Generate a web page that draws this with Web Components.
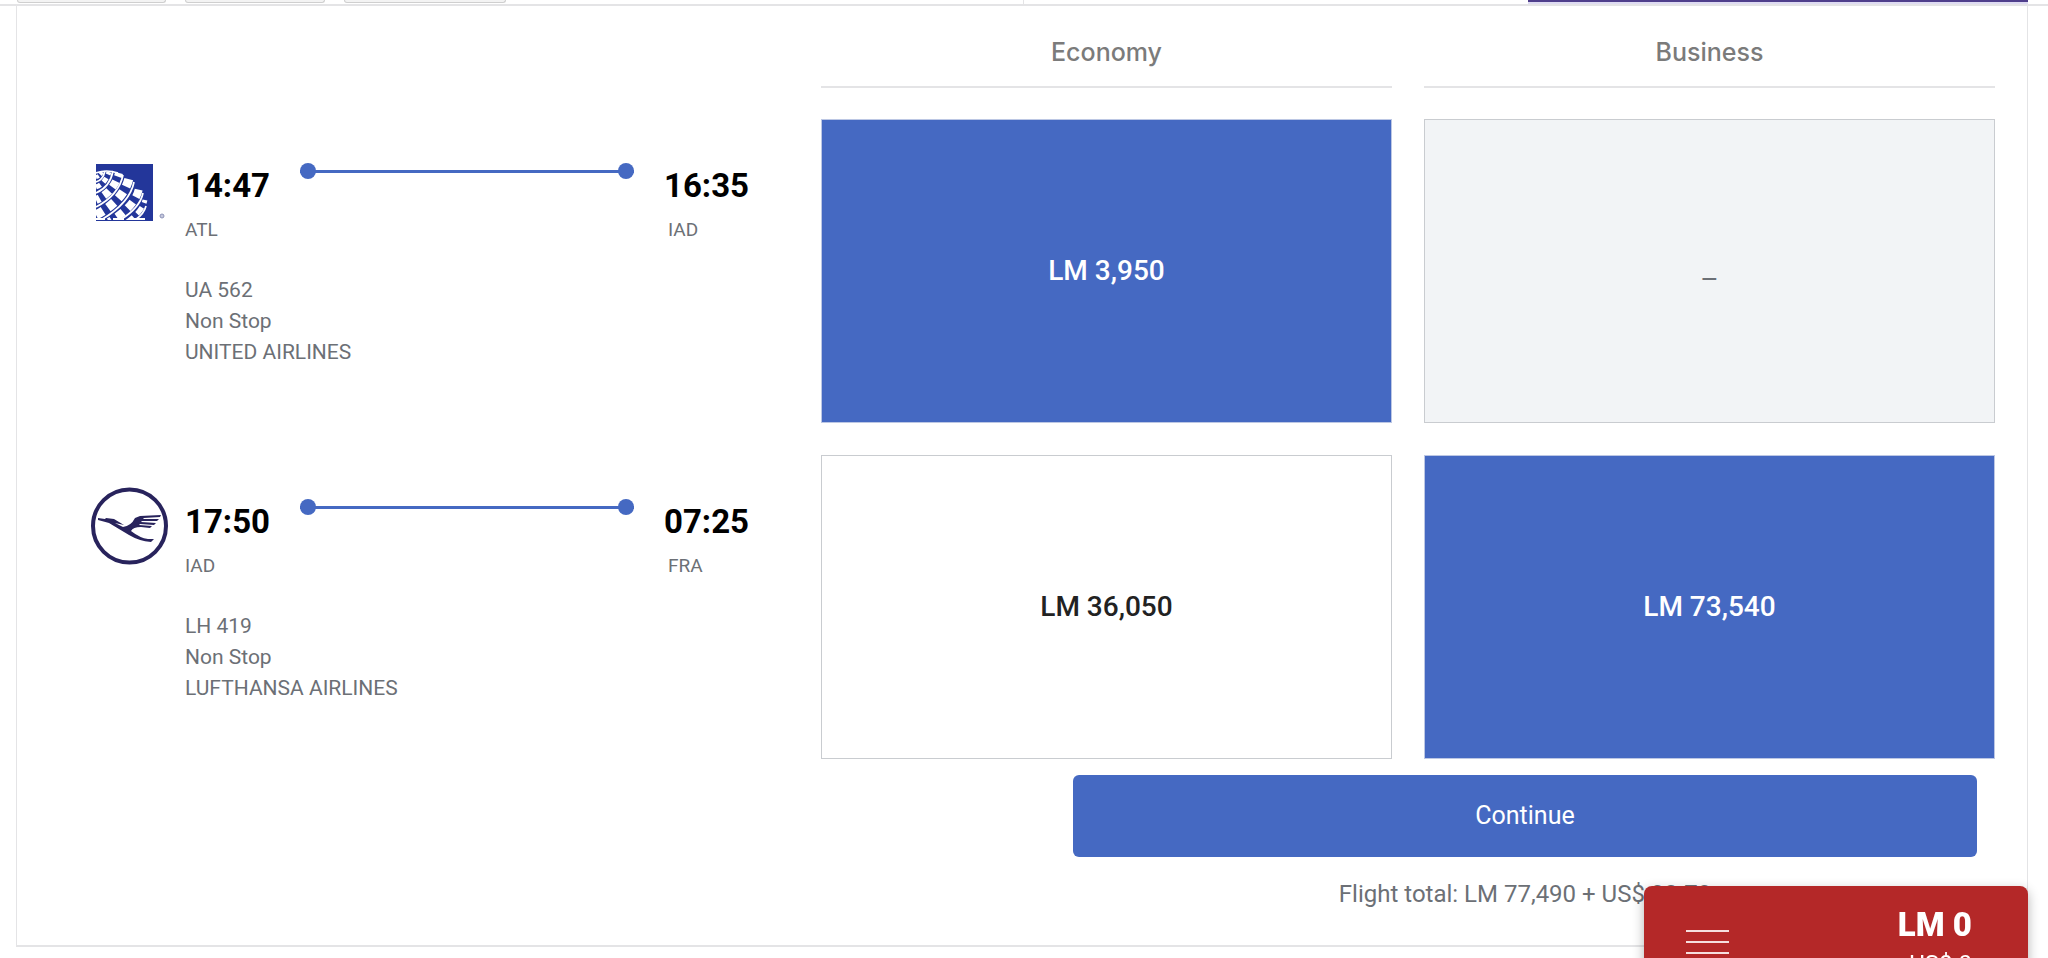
<!DOCTYPE html>
<html lang="en">
<head>
<meta charset="utf-8">
<meta name="viewport" content="width=device-width, initial-scale=1">
<title>Choose your flights</title>
<style>
:root{
	--azul:#4569c2;
	--morado:#4f3f8c;
	--rojo:#b42828;
	--linea:#e4e4e6;
	--borde:#c9ccd0;
	--gris:#6c7076;
}
body{
	margin:0;
	height:100vh;
	overflow:hidden;
	background:#fff;
	color:var(--gris);
	font-family:Roboto, "Liberation Sans", sans-serif;
}
</style>
</head>
<body>
<filter-bar></filter-bar>
<flight-card>
	<cabin-header slot="head"></cabin-header>
	<flight-row from="ATL" to="IAD" departs="14:47" arrives="16:35" number="UA 562" airline="UNITED AIRLINES">
		<united-logo slot="logo"></united-logo>
		<fare-cell slot="fares" selected>LM 3,950</fare-cell>
		<fare-cell slot="fares" disabled>–</fare-cell>
	</flight-row>
	<flight-row from="IAD" to="FRA" departs="17:50" arrives="07:25" number="LH 419" airline="LUFTHANSA AIRLINES">
		<lufthansa-logo slot="logo"></lufthansa-logo>
		<fare-cell slot="fares">LM 36,050</fare-cell>
		<fare-cell slot="fares" selected>LM 73,540</fare-cell>
	</flight-row>
	<flight-total slot="foot">Flight total: LM 77,490 + US$ 32.73</flight-total>
</flight-card>
<mini-cart></mini-cart>

<script>
class BaseElement extends HTMLElement {
  constructor() {
    super()
    this.attachShadow({mode:'open'})
  }
  render() {
    const template = document.createElement("template")
    template.innerHTML = this.getStyles() + this.getTemplate()
    this.shadowRoot.replaceChildren(template.content.cloneNode(true))
  }
  connectedCallback() {
    this.render()
  }
}

// lower edge of the sticky filter bar
class FilterBar extends BaseElement {
  getTemplate() {
    return `
<div class="left"><i class="uno"></i><i class="dos"></i><i class="tres"></i></div>
<div class="right"><b></b></div>
    `
  }
  getStyles() {
    return `
<style>
:host{
	display:grid;
	grid-template-columns:1fr 1fr;
	height:4px;
	border-bottom:2px solid var(--linea);
}
.left{
	display:flex;
	gap:19px;
	padding-left:17px;
	border-right:1px solid var(--linea);
}
i{
	box-sizing:border-box;
	height:3px;
	background:#f3f3f3;
	border:1px solid #cfcfcf;
	border-top:0;
	border-radius:0 0 4px 4px;
}
.uno{width:149px}
.dos{width:140px}
.tres{width:162px}
.right{
	display:flex;
	justify-content:flex-end;
	padding-right:20px;
}
b{
	width:500px;
	height:2px;
	background:var(--morado);
	box-shadow:0 2px 0 #dedbf2;
}
</style>
    `
  }
}
customElements.define("filter-bar",FilterBar)

class FlightCard extends BaseElement {
  getTemplate() {
    return `
<slot name="head"></slot>
<div class="rows"><slot></slot></div>
<slot name="foot"></slot>
    `
  }
  getStyles() {
    return `
<style>
:host{
	display:block;
	margin:0 20px 0 16px;
	padding:0 32px 34px 0;
	border:1px solid var(--linea);
	border-top:0;
	border-bottom-width:2px;
}
.rows{
	display:grid;
	gap:32px;
	padding-top:31px;
}
</style>
    `
  }
}
customElements.define("flight-card",FlightCard)

class CabinHeader extends BaseElement {
  getTemplate() {
    return `<span></span><div>Economy</div><div>Business</div>`
  }
  getStyles() {
    return `
<style>
:host{
	display:grid;
	grid-template-columns:772px 1fr 1fr;
	column-gap:32px;
}
div{
	padding:31px 0 19px;
	border-bottom:2px solid var(--linea);
	font:500 25px/30px Inter, sans-serif;
	color:#7b7b7b;
	text-align:center;
}
</style>
    `
  }
}
customElements.define("cabin-header",CabinHeader)

class FlightRow extends BaseElement {
  getTemplate() {
    const get = name => this.getAttribute(name)
    return `
<section>
	<slot name="logo"></slot>
	<div class="info">
		<div class="trip">
			<div><time>${get("departs")}</time><span>${get("from")}</span></div>
			<div class="route"></div>
			<div class="arrival"><time>${get("arrives")}</time><span>${get("to")}</span></div>
		</div>
		<p>${get("number")}<br>Non Stop<br>${get("airline")}</p>
	</div>
</section>
<slot name="fares"></slot>
    `
  }
  getStyles() {
    return `
<style>
:host{
	display:grid;
	grid-template-columns:772px 1fr 1fr;
	column-gap:32px;
	min-height:304px;
}
section{
	display:grid;
	grid-template-columns:80px 1fr;
	gap:16px;
	padding:31px 40px 0 72px;
}
.info{
	padding-top:13px;
}
.trip{
	display:flex;
	gap:30px;
}
time{
	display:block;
	padding-top:3px;
	font-size:33px;
	line-height:40px;
	font-weight:700;
	color:#000;
}
.trip span{
	display:block;
	padding-top:10px;
	font-size:19px;
	line-height:28px;
}
.arrival span{
	padding-left:4px;
}
.route{
	flex:1;
	display:flex;
	align-items:center;
	height:16px;
	background:linear-gradient(var(--azul),var(--azul)) center/100% 3px no-repeat;
	justify-content:space-between;
}
.route::before,.route::after{
	content:"";
	width:16px;
	height:16px;
	border-radius:50%;
	background:var(--azul);
}
p{
	margin:31px 0 0;
	font-size:21px;
	line-height:31px;
}
</style>
    `
  }
}
customElements.define("flight-row",FlightRow)

class FareCell extends BaseElement {
  getTemplate() {
    return `<button type="button" ${this.hasAttribute("disabled") ? "disabled" : ""}><slot></slot></button>`
  }
  getStyles() {
    return `
<style>
:host{
	display:grid;
}
button{
	border:1px solid var(--borde);
	background:#fff;
	color:#222;
	font:500 28px/36px Roboto, sans-serif;
	cursor:pointer;
}
:host([selected]) button{
	background:var(--azul);
	border-color:#bcc7e4;
	color:#fff;
}
button:disabled{
	padding-top:18px;
	background:#f2f4f6;
	color:var(--gris);
	font-weight:400;
	cursor:default;
}
</style>
    `
  }
}
customElements.define("fare-cell",FareCell)

class FlightTotal extends BaseElement {
  getTemplate() {
    return `
<button type="button">Continue</button>
<p><slot></slot></p>
    `
  }
  getStyles() {
    return `
<style>
:host{
	display:block;
	width:904px;
	margin:16px 18px 0 auto;
	text-align:center;
}
button{
	width:100%;
	padding:24px;
	border:0;
	border-radius:6px;
	background:var(--azul);
	color:#fff;
	font:400 25px/34px Roboto, sans-serif;
	cursor:pointer;
}
p{
	margin:20px 0 0;
	font-size:24px;
	line-height:34px;
}
</style>
    `
  }
}
customElements.define("flight-total",FlightTotal)

// floating cart pinned to the corner, runs off the bottom of the window
class MiniCart extends BaseElement {
  getTemplate() {
    return `
<button type="button" aria-label="Open cart"><i></i><i></i><i></i></button>
<div><strong>LM 0</strong><span>US$ 0</span></div>
    `
  }
  getStyles() {
    return `
<style>
:host{
	position:fixed;
	right:20px;
	bottom:-32px;
	box-sizing:border-box;
	width:384px;
	height:104px;
	display:flex;
	justify-content:space-between;
	align-items:flex-start;
	padding:19px 56px 0 42px;
	border-radius:8px;
	background:var(--rojo);
	color:#fff;
	box-shadow:0 4px 12px rgba(0,0,0,.3);
}
button{
	display:grid;
	gap:9px;
	padding:25px 0 0;
	border:0;
	background:none;
}
i{
	width:43px;
	height:2px;
	background:#f6dede;
}
div{
	text-align:right;
}
strong{
	display:block;
	font-size:33px;
	line-height:40px;
	font-weight:900;
}
span{
	display:block;
	padding-top:4px;
	font-size:24px;
	line-height:30px;
}
</style>
    `
  }
}
customElements.define("mini-cart",MiniCart)

class UnitedLogo extends BaseElement {
  getTemplate() {
    return `
<svg viewBox="0 0 80 76" width="80" height="76" role="img" aria-label="United">
	<clipPath id="box"><path d="M7 14h57v56H7z"/></clipPath>
	<path fill="#23369a" d="M7 14h57v57H7z"/>
	<g clip-path="url(#box)" fill="none" stroke="#fff">
		<g stroke-width="1.700">
			<path d="M7 23Q17 19 29 23"/>
			<path d="M7 32Q14 30 16 21M7 43Q21 37 24 21M7 57Q30 45 34 25M12 70Q41 53 45 32M31 70Q51 58 54 43M46 70Q55 64 57 56"/>
		</g>
		<g stroke-width="4">
			<path stroke-dasharray="3 2" d="M7 27Q11 26 13 22"/>
			<path stroke-width="5" stroke-dasharray="5 4" d="M7 37Q16 34 20 22"/>
		</g>
		<path stroke-width="8" stroke-dasharray="7 5" stroke-dashoffset="3" d="M7 50Q25 42 30 23"/>
		<path stroke-width="9" stroke-dasharray="8 6" d="M7 65Q35 50 40 28"/>
		<path stroke-width="8" stroke-dasharray="8 6" stroke-dashoffset="5" d="M20 72Q47 56 50 38"/>
		<path stroke-width="5" stroke-dasharray="8 5" d="M38 72Q53 62 56 50"/>
		<path stroke-width="2" d="M7 69h9M24 69h11M44 69h12"/>
	</g>
	<circle cx="73" cy="66" r="2" fill="#c5c8dc" stroke="#8d93b8"/>
</svg>
    `
  }
  getStyles() {
    return `<style>:host{display:block}svg{display:block}</style>`
  }
}
customElements.define("united-logo",UnitedLogo)

class LufthansaLogo extends BaseElement {
  getTemplate() {
    return `
<svg viewBox="0 0 80 80" width="80" height="80" role="img" aria-label="Lufthansa">
	<circle cx="40.500" cy="40" r="36.500" fill="none" stroke="#28235c" stroke-width="4"/>
	<path fill="#28235c" d="M9 32l7 1 1-1 8 1 10 6-9-2 8 4q8-1 12-9l5-2 21-1-1 2-16 1-1 1 16 0-2 2-15 0-1 1 15 1-2 2-14-1-1 1 13 1-2 2-9-1q-8 0-10 4 9 7 17 8l6 0-3 3q-12-1-22-7L20 37l-11-3z"/>
</svg>
    `
  }
  getStyles() {
    return `<style>:host{display:block}svg{display:block}</style>`
  }
}
customElements.define("lufthansa-logo",LufthansaLogo)
</script>
</body>
</html>
